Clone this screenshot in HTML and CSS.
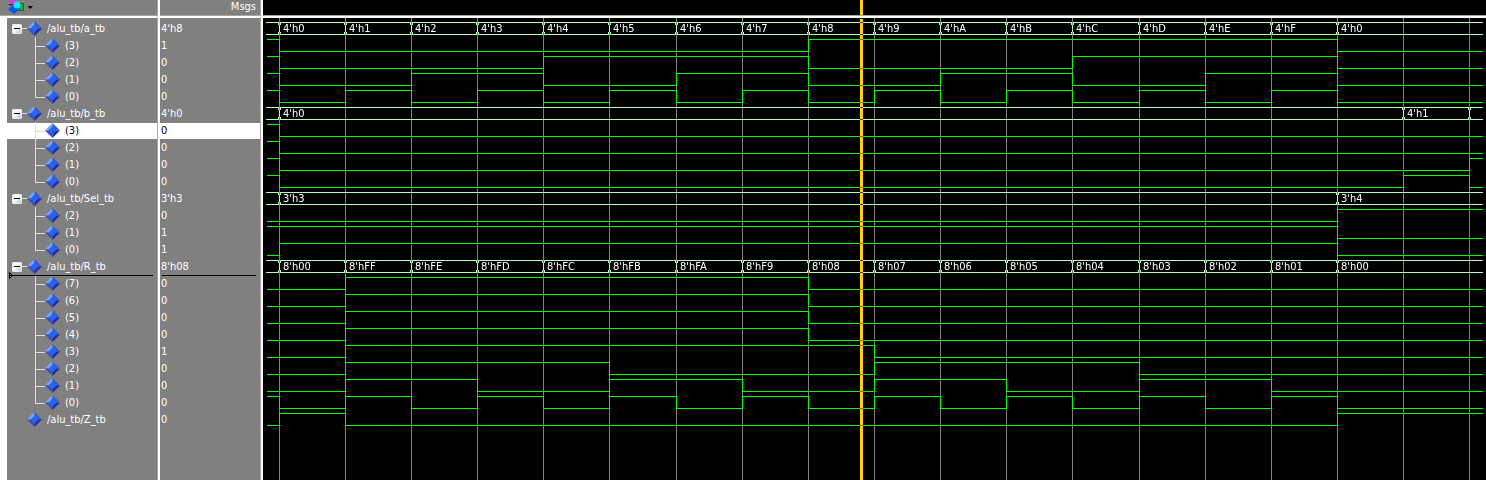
FILE: index.html
```html
<!DOCTYPE html>
<html lang="en">
<head>
<meta charset="utf-8">
<title>Wave - alu_tb</title>
<link rel="stylesheet" href="styles.css">
</head>
<body>
<svg class="defs" width="0" height="0" aria-hidden="true">
  <symbol id="gem" viewBox="0 0 15 15">
    <path d="M7.500 0 0 7.500H7.500Z" fill="#78a4f6"/>
    <path d="M7.500 0 15 7.500H7.500Z" fill="#3a5cc8"/>
    <path d="M0 7.500 7.500 15V7.500Z" fill="#3c50b8"/>
    <path d="M15 7.500 7.500 15V7.500Z" fill="#2c26a0"/>
    <path d="M7.500 3.500 11.500 7.500 7.500 11.500 3.500 7.500Z" fill="#2068fa"/>
  </symbol>
</svg>
<main class="window">
  <section class="pane names">
    <header class="bar">
      <button class="tool" type="button" aria-label="Object filter">
        <svg width="27" height="15" viewBox="0 0 27 15">
          <path d="M4 0H10L7 4H1.500Z" fill="#d838e8"/>
          <path d="M1.500 4H7L6 5.200H2Z" fill="#5a1060"/>
          <path d="M9.500 3.500H16.500V10.500H9.500Z" fill="#18b048" stroke="#0a6428"/>
          <path d="M7.500 3.500 13.500 8 7 14 1 9.500Z" fill="#0858e8"/>
          <circle cx="10" cy="5" r="3.500" fill="#10e8f8"/>
          <path d="M20.500 6H26L23.250 9Z" fill="#000"/>
        </svg>
      </button>
    </header>
    <ul class="rows">
      <li class="row parent"><button class="fold" type="button" aria-label="Collapse a_tb"></button><i class="stub"></i><svg class="gem"><use href="#gem"/></svg>/alu_tb/a_tb</li>
      <li class="row child"><i class="branch"></i><svg class="gem"><use href="#gem"/></svg>(3)</li>
      <li class="row child"><i class="branch"></i><svg class="gem"><use href="#gem"/></svg>(2)</li>
      <li class="row child"><i class="branch"></i><svg class="gem"><use href="#gem"/></svg>(1)</li>
      <li class="row child"><i class="branch last"></i><svg class="gem"><use href="#gem"/></svg>(0)</li>
      <li class="row parent"><button class="fold" type="button" aria-label="Collapse b_tb"></button><i class="stub"></i><svg class="gem"><use href="#gem"/></svg>/alu_tb/b_tb</li>
      <li class="row child selected"><i class="branch"></i><svg class="gem"><use href="#gem"/></svg>(3)</li>
      <li class="row child"><i class="branch"></i><svg class="gem"><use href="#gem"/></svg>(2)</li>
      <li class="row child"><i class="branch"></i><svg class="gem"><use href="#gem"/></svg>(1)</li>
      <li class="row child"><i class="branch last"></i><svg class="gem"><use href="#gem"/></svg>(0)</li>
      <li class="row parent"><button class="fold" type="button" aria-label="Collapse Sel_tb"></button><i class="stub"></i><svg class="gem"><use href="#gem"/></svg>/alu_tb/Sel_tb</li>
      <li class="row child"><i class="branch"></i><svg class="gem"><use href="#gem"/></svg>(2)</li>
      <li class="row child"><i class="branch"></i><svg class="gem"><use href="#gem"/></svg>(1)</li>
      <li class="row child"><i class="branch last"></i><svg class="gem"><use href="#gem"/></svg>(0)</li>
      <li class="row parent insert"><button class="fold" type="button" aria-label="Collapse R_tb"></button><i class="stub"></i><svg class="gem"><use href="#gem"/></svg>/alu_tb/R_tb<svg class="marker" width="4" height="8" viewBox="0 0 4 8"><path d="M.500 .500 3.500 3.500 .500 6.500Z" fill="none" stroke="#000"/></svg></li>
      <li class="row child"><i class="branch"></i><svg class="gem"><use href="#gem"/></svg>(7)</li>
      <li class="row child"><i class="branch"></i><svg class="gem"><use href="#gem"/></svg>(6)</li>
      <li class="row child"><i class="branch"></i><svg class="gem"><use href="#gem"/></svg>(5)</li>
      <li class="row child"><i class="branch"></i><svg class="gem"><use href="#gem"/></svg>(4)</li>
      <li class="row child"><i class="branch"></i><svg class="gem"><use href="#gem"/></svg>(3)</li>
      <li class="row child"><i class="branch"></i><svg class="gem"><use href="#gem"/></svg>(2)</li>
      <li class="row child"><i class="branch"></i><svg class="gem"><use href="#gem"/></svg>(1)</li>
      <li class="row child"><i class="branch last"></i><svg class="gem"><use href="#gem"/></svg>(0)</li>
      <li class="row single"><svg class="gem"><use href="#gem"/></svg>/alu_tb/Z_tb</li>
    </ul>
  </section>
  <section class="pane values">
    <header class="bar">Msgs</header>
    <ul class="rows">
      <li class="row">4'h8</li>
      <li class="row">1</li>
      <li class="row">0</li>
      <li class="row">0</li>
      <li class="row">0</li>
      <li class="row">4'h0</li>
      <li class="row selected">0</li>
      <li class="row">0</li>
      <li class="row">0</li>
      <li class="row">0</li>
      <li class="row">3'h3</li>
      <li class="row">0</li>
      <li class="row">1</li>
      <li class="row">1</li>
      <li class="row insert">8'h08</li>
      <li class="row">0</li>
      <li class="row">0</li>
      <li class="row">0</li>
      <li class="row">0</li>
      <li class="row">1</li>
      <li class="row">0</li>
      <li class="row">0</li>
      <li class="row">0</li>
      <li class="row">0</li>
    </ul>
  </section>
  <section class="pane waves">
    <header class="bar"><i class="cursor"></i></header>
    <div class="plot">
      <svg id="plot" role="img" aria-label="Signal waveforms"></svg>
      <i class="cursor"></i>
    </div>
  </section>
</main>
<script src="waves.js"></script>
</body>
</html>
```
FILE: styles.css
```css
* {
  box-sizing: border-box;
}

body {
  margin: 0;
  background: #fff;
  color: #fff;
  font: 11px/17px "DejaVu Sans Condensed", "Noto Sans", sans-serif;
}

.defs {
  position: absolute;
}

.window {
  display: grid;
  grid-template-columns: 160px 103px 1fr;
  min-height: 100vh;
}

.pane {
  display: flex;
  flex-direction: column;
  min-width: 0;
}

.names,
.values {
  border-right: 2px solid #fff;
}

.bar {
  position: relative;
  flex: none;
  height: 16px;
  border-bottom: 1px solid #a8a4a0;
  background: #808080;
  line-height: 13px;
}

.names .bar,
.values .bar,
.rows {
  border-right: 1px solid #a8a4a0;
}

.values .bar {
  padding-right: 4px;
  text-align: right;
}

.waves .bar {
  background: #000;
}

.tool {
  display: block;
  margin: 0 0 0 7px;
  padding: 0;
  border: 0;
  background: none;
}

.tool svg {
  display: block;
}

.rows {
  flex: 1;
  margin: 0;
  padding: 2px 0 0;
  border-top: 2px solid #fff;
  background: #808080 padding-box;
  list-style: none;
}

.names .rows {
  border-left: 7px solid #fff;
}

.row {
  position: relative;
  display: flex;
  align-items: center;
  height: 17px;
  white-space: nowrap;
}

.values .row {
  padding-left: 1px;
}

.parent {
  padding-left: 5px;
}

.child {
  padding-left: 28px;
}

.single {
  padding-left: 20px;
}

.selected {
  background: linear-gradient(#808080 1px, #fff 1px);
  color: #000;
}

.gem {
  flex: none;
  width: 15px;
  height: 15px;
  margin-right: 5px;
}

.fold {
  flex: none;
  width: 10px;
  height: 10px;
  padding: 0;
  border: 1px solid #e8ecf0;
  border-radius: 1px;
  background:
    linear-gradient(#000, #000) center / 6px 1px no-repeat,
    linear-gradient(135deg, #fff 40%, #b8c4d4);
}

.stub {
  width: 5px;
  height: 1px;
  background: #dcdcdc;
}

.branch {
  width: 10px;
  height: 17px;
  background:
    linear-gradient(#dcdcdc, #dcdcdc) 0 0 / 1px 17px no-repeat,
    linear-gradient(#dcdcdc, #dcdcdc) 0 9px / 10px 1px no-repeat;
}

.branch.last {
  background-size: 1px 10px, 10px 1px;
}

.insert::after {
  content: "";
  position: absolute;
  z-index: 1;
  left: 2px;
  right: 4px;
  bottom: -1px;
  height: 1px;
  background: #000;
}

.marker {
  position: absolute;
  z-index: 1;
  left: 2px;
  bottom: -5px;
}

.plot {
  position: relative;
  isolation: isolate;
  flex: 1;
  border-top: 2px solid #fff;
  background: #000;
}

.plot svg {
  position: absolute;
  width: 100%;
  height: 100%;
  shape-rendering: crispEdges;
}

.cursor {
  position: absolute;
  top: 0;
  bottom: 0;
  left: 597px;
  width: 3px;
  background: #ffd200;
}

.plot .cursor {
  top: 1px;
  mix-blend-mode: difference;
}

.grid {
  stroke: #808080;
}

.bit {
  fill: none;
  stroke: #00ff00;
}

.bus {
  fill: none;
  stroke: #b4ffb4;
}

.label {
  fill: #fff;
}
```
FILE: waves.js
```javascript
const ROW = 17;
const TOP = 2;
const START = 3;
const TICKS = 19;
const LABEL_ROOM = 28;

const range = (from, to) => {
  const step = from < to ? 1 : -1;
  return Array.from({ length: Math.abs(to - from) + 1 }, (_, i) => from + i * step);
};

// The first value is the one held before tick 0; the last one holds to the end.
const signals = [
  { width: 4, values: [15, ...range(0, 15), 0] },
  { width: 4, values: [15, ...Array(17).fill(0), 1, 2] },
  { width: 3, values: [2, ...Array(16).fill(3), 4] },
  { width: 8, values: [1, 0, ...range(255, 249), ...range(8, 0)] },
  { width: 1, values: [0, 1, ...Array(15).fill(0), 1] }
];

const tickX = k => Math.floor(16.1 + 66.15 * k);

function segments(values, end) {
  const list = [];
  values.forEach((value, i) => {
    const x = i === 0 ? START : tickX(i - 1);
    const last = list[list.length - 1];
    if (!last || last.value !== value) list.push({ value, x });
  });
  list.forEach((s, i) => { s.end = i + 1 < list.length ? list[i + 1].x : end; });
  return list;
}

function drawBit(values, y, end) {
  const d = segments(values, end).map((s, i) => {
    const level = y + (s.value ? 2.5 : 14.5);
    const x = i ? s.x + 0.5 : s.x + 1;
    const stop = s.end === end ? end : s.end + 0.5;
    return `${i ? "L" : "M"}${x} ${level}H${stop}`;
  }).join("");
  return `<path class="bit" d="${d}"/>`;
}

function drawBus(signal, y, end) {
  const parts = segments(signal.values, end);
  let out = "";
  parts.forEach((s, i) => {
    const from = i ? s.x + 1 : s.x;
    out += `<path class="bus" d="M${from} ${y + 2.5}H${s.end}M${from} ${y + 14.5}H${s.end}"/>`;
    if (!i) return;
    const l = s.x - 0.5, c = s.x + 0.5, r = s.x + 1.5;
    out += `<path class="bus" d="M${l} ${y + 2}v3M${r} ${y + 2}v3M${c} ${y + 5}v7M${l} ${y + 12}v3M${r} ${y + 12}v3"/>`;
    if (s.end - s.x < LABEL_ROOM) return;
    const hex = s.value.toString(16).toUpperCase().padStart(Math.ceil(signal.width / 4), "0");
    out += `<text class="label" x="${s.x + 4}" y="${y + 12}">${signal.width}'h${hex}</text>`;
  });
  return out;
}

function draw() {
  const plot = document.getElementById("plot");
  const end = plot.clientWidth - 3;
  let out = "";
  for (let k = 0; k < TICKS; k++) {
    out += `<path class="grid" d="M${tickX(k) + 0.5} 0V${plot.clientHeight}"/>`;
  }
  let y = TOP;
  for (const signal of signals) {
    if (signal.width > 1) {
      out += drawBus(signal, y, end);
      y += ROW;
    }
    for (let bit = signal.width - 1; bit >= 0; bit--) {
      out += drawBit(signal.values.map(v => (v >> bit) & 1), y, end);
      y += ROW;
    }
  }
  plot.innerHTML = out;
}

draw();
window.addEventListener("resize", draw);
```
